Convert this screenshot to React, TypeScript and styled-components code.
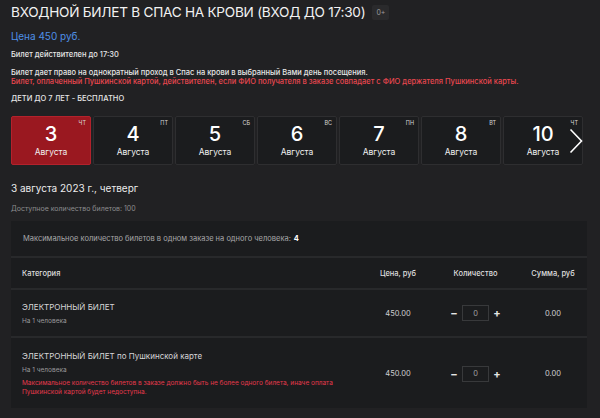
import { createGlobalStyle, styled } from "styled-components";

const GlobalStyle = createGlobalStyle`
  html, body {
    margin: 0;
    padding: 0;
    background: #212123;
  }
  body {
    font-family: Inter, "Noto Sans", sans-serif;
    color: #e8e8e8;
  }
`;

interface Day {
  num: string;
  month: string;
  weekday: string;
  active?: boolean;
}

const days: Day[] = [
  { num: "3", month: "Августа", weekday: "ЧТ", active: true },
  { num: "4", month: "Августа", weekday: "ПТ" },
  { num: "5", month: "Августа", weekday: "СБ" },
  { num: "6", month: "Августа", weekday: "ВС" },
  { num: "7", month: "Августа", weekday: "ПН" },
  { num: "8", month: "Августа", weekday: "ВТ" },
  { num: "10", month: "Августа", weekday: "ЧТ" },
];

function QtyStepper() {
  return (
    <Stepper>
      <StepBtn>−</StepBtn>
      <Qty>0</Qty>
      <StepBtn>+</StepBtn>
    </Stepper>
  );
}

export default function App() {
  return (
    <Page>
      <GlobalStyle />
      <TitleRow>
        <Title>ВХОДНОЙ БИЛЕТ В СПАС НА КРОВИ (ВХОД ДО 17:30)</Title>
        <AgeBadge>0+</AgeBadge>
      </TitleRow>
      <Price>Цена 450 руб.</Price>
      <Note>Билет действителен до 17:30</Note>
      <Description>
        <div>Билет дает право на однократный проход в Спас на крови в выбранный Вами день посещения.</div>
        <Warning>
          Билет, оплаченный Пушкинской картой, действителен, если ФИО получателя в заказе совпадает с ФИО держателя Пушкинской карты.
        </Warning>
      </Description>
      <Note>ДЕТИ ДО 7 ЛЕТ - БЕСПЛАТНО</Note>

      <Calendar>
        {days.map((d) => (
          <DayCard key={d.num} $active={d.active}>
            <Weekday>{d.weekday}</Weekday>
            <DayNum>{d.num}</DayNum>
            <DayMonth>{d.month}</DayMonth>
          </DayCard>
        ))}
        <NextArrow>
          <svg width="14" height="26" viewBox="0 0 14 26" fill="none">
            <path d="M1.5 1.5 L12.5 13 L1.5 24.5" stroke="#fff" strokeWidth="1.6" />
          </svg>
        </NextArrow>
      </Calendar>

      <DateHeading>3 августа 2023 г., четверг</DateHeading>
      <Available>Доступное количество билетов: 100</Available>

      <Panel>
        <InfoRow>
          Максимальное количество билетов в одном заказе на одного человека: <b>4</b>
        </InfoRow>
        <TableRow $head>
          <CategoryCell>Категория</CategoryCell>
          <Cell>Цена, руб</Cell>
          <Cell>Количество</Cell>
          <Cell>Сумма, руб</Cell>
        </TableRow>
        <TableRow>
          <CategoryCell>
            <TicketName>ЭЛЕКТРОННЫЙ БИЛЕТ</TicketName>
            <TicketSub>На 1 человека</TicketSub>
          </CategoryCell>
          <Cell>450.00</Cell>
          <Cell>
            <QtyStepper />
          </Cell>
          <Cell>0.00</Cell>
        </TableRow>
        <TableRow $last>
          <CategoryCell>
            <TicketName>ЭЛЕКТРОННЫЙ БИЛЕТ по Пушкинской карте</TicketName>
            <TicketSub>На 1 человека</TicketSub>
            <RowWarning>
              Максимальное количество билетов в заказе должно быть не более одного билета, иначе оплата Пушкинской картой будет недоступна.
            </RowWarning>
          </CategoryCell>
          <Cell>450.00</Cell>
          <Cell>
            <QtyStepper />
          </Cell>
          <Cell>0.00</Cell>
        </TableRow>
      </Panel>
    </Page>
  );
}

const Page = styled.div`
  padding: 4px 13px 0 11px;
`;

const TitleRow = styled.div`
  display: flex;
  align-items: center;
  gap: 7px;
`;

const Title = styled.h1`
  margin: 0;
  font-size: 13.6px;
  line-height: 17px;
  font-weight: 400;
  letter-spacing: -0.25px;
  color: #f2f2f2;
`;

const AgeBadge = styled.span`
  font-size: 7px;
  color: #9a9a9c;
  background: #2a2a2c;
  padding: 3px 4px;
  border-radius: 2px;
`;

const Price = styled.div`
  margin-top: 9px;
  font-size: 10px;
  color: #4e8fe6;
`;

const Note = styled.div`
  margin-top: 8px;
  font-size: 7.5px;
  font-weight: 500;
  color: #e6e6e6;
`;

const Description = styled.div`
  margin-top: 10px;
  font-size: 7.5px;
  line-height: 8.5px;
  font-weight: 500;
  color: #e6e6e6;
`;

const Warning = styled.div`
  color: #e8474f;
`;

const Calendar = styled.div`
  position: relative;
  margin-top: 13px;
  display: flex;
  gap: 2px;
`;

const DayCard = styled.div<{ $active?: boolean }>`
  position: relative;
  width: 80px;
  height: 49px;
  box-sizing: border-box;
  border: 1px solid ${(p) => (p.$active ? "#b3222c" : "#2e2e30")};
  border-radius: 2px;
  background: ${(p) => (p.$active ? "#9a1820" : "#1b1c1e")};
  display: flex;
  flex-direction: column;
  align-items: center;
  justify-content: center;
`;

const Weekday = styled.span`
  position: absolute;
  top: 3px;
  right: 4px;
  font-size: 5.5px;
  color: #d8d8d8;
`;

const DayNum = styled.div`
  font-size: 20px;
  line-height: 21px;
  font-weight: 500;
  color: #fff;
`;

const DayMonth = styled.div`
  margin-top: 2px;
  font-size: 8.5px;
  color: #f0f0f0;
`;

const NextArrow = styled.div`
  position: absolute;
  right: 4px;
  top: 12px;
  display: flex;
`;

const DateHeading = styled.div`
  margin-top: 17px;
  font-size: 10px;
  color: #ececec;
`;

const Available = styled.div`
  margin-top: 10px;
  font-size: 7px;
  color: #8c8c8e;
`;

const Panel = styled.div`
  margin-top: 8px;
  background: #1b1c1e;
`;

const InfoRow = styled.div`
  height: 35px;
  display: flex;
  align-items: center;
  padding-left: 12px;
  font-size: 7.5px;
  color: #a8a8aa;
  border-bottom: 2px solid #28292b;

  b {
    color: #fff;
    margin-left: 3px;
  }
`;

const TableRow = styled.div<{ $head?: boolean; $last?: boolean }>`
  display: grid;
  grid-template-columns: 1fr 78px 77px 73px;
  align-items: center;
  min-height: ${(p) => (p.$head ? "32px" : "48px")};
  padding: ${(p) => (p.$last ? "13px 0 12px" : "0")};
  box-sizing: border-box;
  border-bottom: ${(p) => (p.$last ? "none" : "2px solid #28292b")};
  font-size: 7.5px;
  color: ${(p) => (p.$head ? "#dedede" : "#cfcfd1")};
  font-weight: ${(p) => (p.$head ? 500 : 400)};
`;

const Cell = styled.div`
  display: flex;
  justify-content: center;

  &:last-child {
    padding-left: 5px;
  }
`;

const CategoryCell = styled.div`
  padding-left: 11px;
`;

const TicketName = styled.div`
  font-size: 8px;
  color: #d6d6d8;
`;

const TicketSub = styled.div`
  margin-top: 5px;
  font-size: 6.5px;
  color: #9a9a9c;
`;

const RowWarning = styled.div`
  margin-top: 5px;
  font-size: 6.5px;
  line-height: 8.5px;
  color: #e5394c;
  max-width: 330px;
`;

const Stepper = styled.div`
  display: flex;
  align-items: center;
  gap: 4px;
`;

const StepBtn = styled.span`
  font-size: 11px;
  font-weight: 700;
  color: #e6e6e6;
  width: 8px;
  text-align: center;
`;

const Qty = styled.div`
  width: 27px;
  height: 16px;
  box-sizing: border-box;
  border: 1px solid #38393b;
  display: flex;
  align-items: center;
  justify-content: center;
  font-size: 7.5px;
  color: #a0a0a2;
`;
